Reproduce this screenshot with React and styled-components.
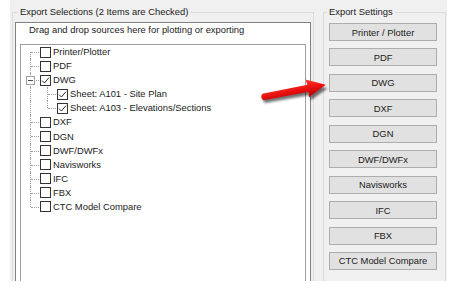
import React from "react";
import styled, { createGlobalStyle } from "styled-components";

const GlobalStyle = createGlobalStyle`
  html, body {
    margin: 0;
    padding: 0;
    background: #ffffff;
  }
  body {
    font-family: "Liberation Sans", Arial, sans-serif;
    font-size: 9.4px;
    font-weight: 400;
    color: #1a1a1a;
  }
`;

const tree = [
  { label: "Printer/Plotter", guides: ["bottom"] },
  { label: "PDF", guides: ["full"] },
  { label: "DWG", guides: ["full"], checked: true, expanded: true },
  { label: "Sheet: A101 - Site Plan", guides: ["full", "full"], checked: true },
  { label: "Sheet: A103 - Elevations/Sections", guides: ["full", "top"], checked: true },
  { label: "DXF", guides: ["full"] },
  { label: "DGN", guides: ["full"] },
  { label: "DWF/DWFx", guides: ["full"] },
  { label: "Navisworks", guides: ["full"] },
  { label: "IFC", guides: ["full"] },
  { label: "FBX", guides: ["full"] },
  { label: "CTC Model Compare", guides: ["top"] },
];

const settings = [
  "Printer / Plotter",
  "PDF",
  "DWG",
  "DXF",
  "DGN",
  "DWF/DWFx",
  "Navisworks",
  "IFC",
  "FBX",
  "CTC Model Compare",
];

const App = () => {
  return (
    <>
      <GlobalStyle />
      <Dialog>
        <GroupBox $width={302}>
          <Legend $inset={5}>Export Selections (2 Items are Checked)</Legend>
          <Panel>
            <Hint>Drag and drop sources here for plotting or exporting</Hint>
            <TreeBox>
              {tree.map((node, i) => (
                <TreeRow key={i}>
                  {node.guides.map((v, j) => (
                    <Guide key={j} $v={v} $h={j === node.guides.length - 1}>
                      {node.expanded && (
                        <Expander>
                          <span />
                        </Expander>
                      )}
                    </Guide>
                  ))}
                  <CheckBox>
                    {node.checked && (
                      <svg width="9" height="9" viewBox="0 0 9 9">
                        <path
                          d="M1 4.6 L3.4 7 L8 1.6"
                          fill="none"
                          stroke="#2b2b2b"
                          strokeWidth="1"
                        />
                      </svg>
                    )}
                  </CheckBox>
                  <NodeLabel>{node.label}</NodeLabel>
                </TreeRow>
              ))}
            </TreeBox>
          </Panel>
        </GroupBox>

        <GroupBox $width={123}>
          <Legend $inset={3}>Export Settings</Legend>
          <ButtonColumn>
            {settings.map((s) => (
              <SettingButton key={s}>{s}</SettingButton>
            ))}
          </ButtonColumn>
        </GroupBox>

        <Arrow width="84" height="40" viewBox="0 0 84 40">
          <defs>
            <filter id="arrowShadow" x="-20%" y="-40%" width="140%" height="180%">
              <feGaussianBlur stdDeviation="1.3" />
            </filter>
            <linearGradient id="arrowRed" x1="0" y1="0" x2="0" y2="1">
              <stop offset="0" stopColor="#ff3a2a" />
              <stop offset="0.5" stopColor="#e81010" />
              <stop offset="1" stopColor="#b80000" />
            </linearGradient>
          </defs>
          <g transform="translate(9.5 29.5) rotate(2)">
            <g transform="rotate(-12)">
              <path
                d="M0 -3.4 L46 -3.6 L45 -9 L64 0 L45 9 L46 3.6 L0 3.4 Q-3.4 0 0 -3.4 Z"
                fill="#000"
                opacity="0.55"
                filter="url(#arrowShadow)"
              />
            </g>
          </g>
          <g transform="translate(8 27)">
            <g transform="rotate(-11)">
              <path
                d="M0 -3.4 L46 -3.6 L45 -9 L64 0 L45 9 L46 3.6 L0 3.4 Q-3.4 0 0 -3.4 Z"
                fill="url(#arrowRed)"
              />
            </g>
          </g>
        </Arrow>
      </Dialog>
    </>
  );
};

const Dialog = styled.div`
  position: relative;
  margin-left: 10px;
  width: 437px;
  height: 281px;
  box-sizing: border-box;
  padding: 6px 2px 0 2px;
  background: #f0f0f0;
  overflow: hidden;
  display: flex;
  align-items: flex-start;
  gap: 9px;
`;

const GroupBox = styled.fieldset`
  margin: 0;
  padding: 0;
  min-width: 0;
  width: ${(p) => p.$width}px;
  height: 320px;
  box-sizing: border-box;
  border: 1px solid #dcdcdc;
  flex: none;
  display: flex;
  flex-direction: column;
`;

const Legend = styled.legend`
  margin-left: ${(p) => p.$inset}px;
  padding: 0 2px;
  font-size: 9.4px;
  line-height: 12px;
  color: #1a1a1a;
  white-space: nowrap;
`;

const Panel = styled.div`
  margin: 4px 2px 0 2px;
  flex: 1;
  background: #ffffff;
  border: 1px solid #828282;
  padding: 0 4px;
  display: flex;
  flex-direction: column;
`;

const Hint = styled.div`
  height: 21px;
  box-sizing: border-box;
  padding: 1px 0 0 9px;
  line-height: 12px;
  white-space: nowrap;
`;

const TreeBox = styled.div`
  flex: 1;
  border: 1px solid #a0a0a0;
  padding-left: 1px;
  display: flex;
  flex-direction: column;
`;

const TreeRow = styled.div`
  height: 14.09px;
  display: flex;
  align-items: center;
  white-space: nowrap;
`;

const Guide = styled.span`
  position: relative;
  flex: none;
  width: 17px;
  height: 100%;
  display: flex;
  align-items: center;
  justify-content: center;

  &::before {
    content: "";
    display: ${(p) => (p.$v === "none" ? "none" : "block")};
    position: absolute;
    left: 8px;
    top: ${(p) => (p.$v === "bottom" ? "7px" : "0")};
    bottom: ${(p) => (p.$v === "top" ? "7px" : "0")};
    border-left: 1px dotted #a0a0a0;
  }

  &::after {
    content: "";
    display: ${(p) => (p.$h ? "block" : "none")};
    position: absolute;
    left: 9px;
    right: 0;
    top: 7px;
    border-top: 1px dotted #a0a0a0;
  }
`;

const Expander = styled.span`
  position: relative;
  z-index: 1;
  width: 7px;
  height: 7px;
  border: 1px solid #a0a0a0;
  background: #ffffff;
  display: flex;
  align-items: center;
  justify-content: center;

  span {
    width: 5px;
    height: 1px;
    background: #505050;
  }
`;

const CheckBox = styled.span`
  flex: none;
  margin-left: 1px;
  width: 11px;
  height: 11px;
  box-sizing: border-box;
  border: 1px solid #333333;
  background: #ffffff;
  display: flex;
  align-items: center;
  justify-content: center;
`;

const NodeLabel = styled.span`
  margin-left: 2px;
  line-height: 12px;
`;

const ButtonColumn = styled.div`
  margin: 5px 0 0 5px;
  width: 108px;
  display: flex;
  flex-direction: column;
  gap: 7.44px;
`;

const SettingButton = styled.button`
  height: 18px;
  padding: 0;
  margin: 0;
  box-sizing: border-box;
  border: 1px solid #adadad;
  border-radius: 0;
  background: #e1e1e1;
  font-family: "Liberation Sans", Arial, sans-serif;
  font-size: 9.4px;
  font-weight: 400;
  color: #1a1a1a;
  text-align: center;
`;

const Arrow = styled.svg`
  position: absolute;
  left: 245px;
  top: 70px;
  overflow: visible;
`;

export default App;
